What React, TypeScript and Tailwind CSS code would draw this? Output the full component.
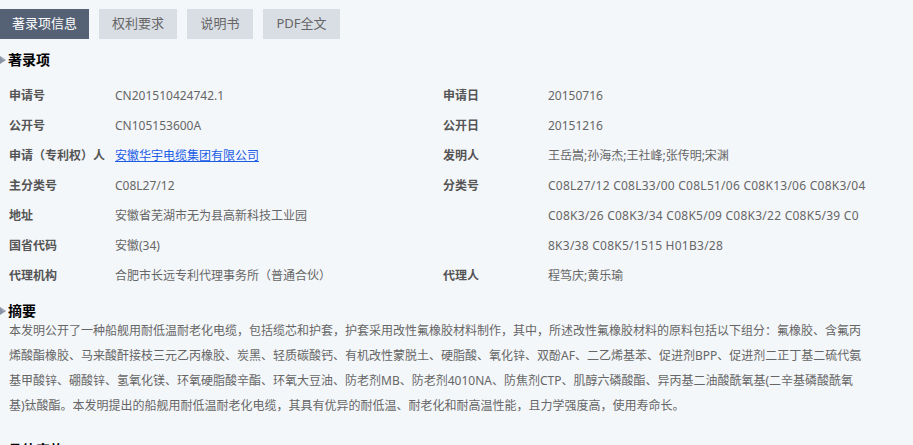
import React from "react";

const font = { fontFamily: '"Noto Sans", "Noto Sans CJK SC", sans-serif' };

function Bullet() {
  return (
    <svg width="7" height="10" viewBox="0 0 7 10" className="mr-[1px] shrink-0">
      <polygon points="0,1 6,5 0,9" fill="#8a93a6" />
      <polygon points="0,1 6,5 3,5" fill="#a9b0bf" />
    </svg>
  );
}

function Heading({ title }: { title: string }) {
  return (
    <div className="flex items-center h-[25px] pt-[10px]">
      <div className="flex items-center h-[20px] text-[14px] font-bold text-black leading-[20px]">
        <Bullet />
        <span>{title}</span>
      </div>
    </div>
  );
}

type Row = { label: string; value: React.ReactNode };

const leftRows: Row[] = [
  { label: "申请号", value: "CN201510424742.1" },
  { label: "公开号", value: "CN105153600A" },
  {
    label: "申请（专利权）人",
    value: (
      <a className="text-[#1a5ce6] underline cursor-pointer">安徽华宇电缆集团有限公司</a>
    ),
  },
  { label: "主分类号", value: "C08L27/12" },
  { label: "地址", value: "安徽省芜湖市无为县高新科技工业园" },
  { label: "国省代码", value: "安徽(34)" },
  { label: "代理机构", value: "合肥市长远专利代理事务所（普通合伙）" },
];

const rightRows: Row[] = [
  { label: "申请日", value: "20150716" },
  { label: "公开日", value: "20151216" },
  { label: "发明人", value: "王岳嵩;孙海杰;王社峰;张传明;宋渊" },
  {
    label: "分类号",
    value: (
      <span className="tracking-[0.25px]">
        C08L27/12 C08L33/00 C08L51/06 C08K13/06 C08K3/04
        <br />
        C08K3/26 C08K3/34 C08K5/09 C08K3/22 C08K5/39 C0
        <br />
        8K3/38 C08K5/1515 H01B3/28
      </span>
    ),
  },
  { label: "代理人", value: "程笃庆;黄乐瑜" },
];

function Rows({ rows, labelW }: { rows: Row[]; labelW: string }) {
  return (
    <div className="flex flex-col">
      {rows.map((r) => (
        <div key={r.label} className="flex items-start text-[12px] leading-[30px]">
          <div className={`${labelW} shrink-0 font-bold text-[#555] whitespace-nowrap`}>{r.label}</div>
          <div className="w-[340px] text-[#666] whitespace-nowrap">{r.value}</div>
        </div>
      ))}
    </div>
  );
}

export default function App() {
  return (
    <div className="w-[913px] h-[445px] overflow-hidden bg-[#f4f7fa]" style={font}>
      <div className="flex gap-[10px] pt-[9px] text-[13px]">
        <div className="w-[89px] h-[30px] flex items-center justify-center bg-[#556275] text-white">著录项信息</div>
        <div className="w-[78px] h-[30px] flex items-center justify-center bg-[#d9dde4] text-[#666]">权利要求</div>
        <div className="w-[66px] h-[30px] flex items-center justify-center bg-[#d9dde4] text-[#666]">说明书</div>
        <div className="w-[77px] h-[30px] flex items-center justify-center bg-[#d9dde4] text-[#666]">PDF全文</div>
      </div>
      <div className="h-[42px] flex items-center">
        <div className="flex items-center text-[14px] font-bold text-black leading-[20px]">
          <Bullet />
          <span>著录项</span>
        </div>
      </div>
      <div className="flex">
        <div className="w-[434px] pl-[9px]">
          <Rows rows={leftRows} labelW="w-[106px]" />
        </div>
        <div className="pl-[9px]">
          <Rows rows={rightRows} labelW="w-[105px]" />
        </div>
      </div>
      <div className="pt-[2px]">
        <Heading title="摘要" />
      </div>
      <p className="pl-[9px] w-[863px] text-[12px] leading-[25px] text-[#666] pb-[14px]">
        本发明公开了一种船舰用耐低温耐老化电缆，包括缆芯和护套，护套采用改性氟橡胶材料制作，其中，所述改性氟橡胶材料的原料包括以下组分：氟橡胶、含氟丙烯酸酯橡胶、马来酸酐接枝三元乙丙橡胶、炭黑、轻质碳酸钙、有机改性蒙脱土、硬脂酸、氧化锌、双酚AF、二乙烯基苯、促进剂BPP、促进剂二正丁基二硫代氨基甲酸锌、硼酸锌、氢氧化镁、环氧硬脂酸辛酯、环氧大豆油、防老剂MB、防老剂4010NA、防焦剂CTP、肌醇六磷酸酯、异丙基二油酸酰氧基(二辛基磷酸酰氧基)钛酸酯。本发明提出的船舰用耐低温耐老化电缆，其具有优异的耐低温、耐老化和耐高温性能，且力学强度高，使用寿命长。
      </p>
      <Heading title="具体实施" />
    </div>
  );
}
